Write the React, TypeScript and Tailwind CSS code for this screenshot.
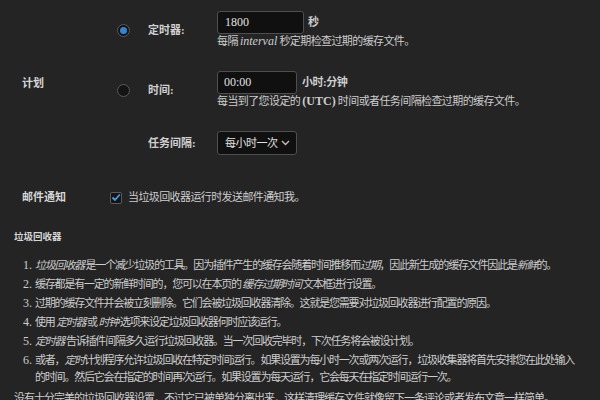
import React, { useState } from 'react';

const font = { fontFamily: '"Liberation Serif", "Noto Sans CJK SC", serif' };

const Radio = ({ checked }: { checked: boolean }) => (
  <span className="ml-[7px] flex h-[13px] w-[13px] items-center justify-center rounded-full border border-[#5a5a5a] bg-[#141414]">
    {checked && <span className="h-[7px] w-[7px] rounded-full bg-[#3583d6]" />}
  </span>
);

// latin words inside the cjk help text keep normal spacing
const Latin = ({ children }: { children: React.ReactNode }) => (
  <span className="text-[12px] tracking-normal">{children}</span>
);

const steps: React.ReactNode[] = [
  <>
    <i>垃圾回收器</i> 是一个减少垃圾的工具。因为插件产生的缓存会随着时间推移而<i>过期</i>，因此新生成的缓存文件因此是<i>新鲜</i>的。
  </>,
  <>
    缓存都是有一定的新鲜时间的，您可以在本页的 <i>缓存过期时间</i> 文本框进行设置。
  </>,
  <>过期的缓存文件并会被立刻删除。它们会被垃圾回收器清除。这就是您需要对垃圾回收器进行配置的原因。</>,
  <>
    使用 <i>定时器</i> 或 <i>时钟</i> 选项来设定垃圾回收器何时应该运行。
  </>,
  <>
    <i>定时器</i> 告诉插件间隔多久运行垃圾回收器。当一次回收完毕时，下次任务将会被设计划。
  </>,
  <>
    或者，<i>定时</i>计划程序允许垃圾回收在特定时间运行。如果设置为每小时一次或两次运行，垃圾收集器将首先安排您在此处输入的时间。然后它会在指定的时间再次运行。如果设置为每天运行，它会每天在指定时间运行一次。
  </>,
];

export default function App() {
  const [mode, setMode] = useState('timer');

  return (
    <div className="h-[400px] w-[600px] overflow-hidden bg-[#242424] text-[#cdcdcd]" style={font}>
      {/* schedule */}
      <div className="flex items-center pt-[11px]">
        <div className="w-[110px] pl-[22px] text-[11px] font-bold text-[#d6d6d6]">计划</div>
        <div className="grid grid-cols-[38px_69px_auto] items-center gap-y-[22px]">
          <div onClick={() => setMode('timer')}>
            <Radio checked={mode === 'timer'} />
          </div>
          <div className="text-[11px] font-bold text-[#d0d0d0]">定时器:</div>
          <div>
            <div className="flex items-center gap-[4px]">
              <input
                defaultValue="1800"
                className="h-[23px] w-[87px] rounded-[3px] border border-[#4e4e4e] bg-[#101010] px-[7px] text-[12px] text-[#e0e0e0] outline-none"
                style={font}
              />
              <span className="text-[11px] font-bold">秒</span>
            </div>
            <div className="text-[11px] leading-[15px] tracking-[-0.6px]">
              每隔 <Latin><i>interval</i></Latin> 秒定期检查过期的缓存文件。
            </div>
          </div>

          <div onClick={() => setMode('clock')}>
            <Radio checked={mode === 'clock'} />
          </div>
          <div className="text-[11px] font-bold text-[#d0d0d0]">时间:</div>
          <div>
            <div className="flex items-center gap-[5px]">
              <input
                defaultValue="00:00"
                className="h-[23px] w-[80px] rounded-[3px] border border-[#4e4e4e] bg-[#101010] px-[6px] text-[12px] text-[#e0e0e0] outline-none"
                style={font}
              />
              <span className="text-[11px] font-bold tracking-[-0.5px]">小时:分钟</span>
            </div>
            <div className="text-[11px] leading-[15px] tracking-[-0.6px]">
              每当到了您设定的 <Latin><b>(UTC)</b></Latin> 时间或者任务间隔检查过期的缓存文件。
            </div>
          </div>

          <div />
          <div className="text-[11px] font-bold text-[#d0d0d0]">任务间隔:</div>
          <div>
            <div className="flex h-[24px] w-[80px] items-center justify-between rounded-[3px] border border-[#4e4e4e] bg-[#101010] pl-[7px] pr-[6px] text-[11px] text-[#e0e0e0]">
              <span className="tracking-[-0.5px]">每小时一次</span>
              <svg width="9" height="6" viewBox="0 0 9 6" fill="none" stroke="#bdbdbd" strokeWidth="1.4">
                <path d="M1 1l3.5 3.5L8 1" />
              </svg>
            </div>
          </div>
        </div>
      </div>

      {/* email */}
      <div className="mt-[34px] flex h-[17px] items-center">
        <div className="w-[110px] pl-[22px] text-[11px] font-bold text-[#d6d6d6]">邮件通知</div>
        <span className="flex h-[12px] w-[12px] items-center justify-center rounded-[2px] border border-[#5a5a5a] bg-[#141414]">
          <svg width="10" height="9" viewBox="0 0 10 9" fill="none" stroke="#4a9be8" strokeWidth="1.8">
            <path d="M1.5 4.5l2.5 2.5L8.8 1.5" />
          </svg>
        </span>
        <span className="ml-[6px] text-[11px] tracking-[-0.6px]">当垃圾回收器运行时发送邮件通知我。</span>
      </div>

      {/* help */}
      <div className="pl-[14px] pr-[18px]">
        <h3 className="mt-[24px] text-[9.5px] font-bold leading-[14px] text-[#d6d6d6]">垃圾回收器</h3>
        <ol className="mt-[13px] list-decimal pl-[21px] text-[11px] leading-[17px] tracking-[-1.2px] marker:text-[12px] marker:tracking-normal">
          {steps.map((s, i) => (
            <li key={i} className="mb-[2px]">
              {s}
            </li>
          ))}
        </ol>
        <p className="mt-[4px] text-[11px] leading-[17px] tracking-[-1px]">
          没有十分完美的垃圾回收器设置，不过它已被单独分离出来，这样清理缓存文件就像留下一条评论或者发布文章一样简单。
        </p>
      </div>
    </div>
  );
}
